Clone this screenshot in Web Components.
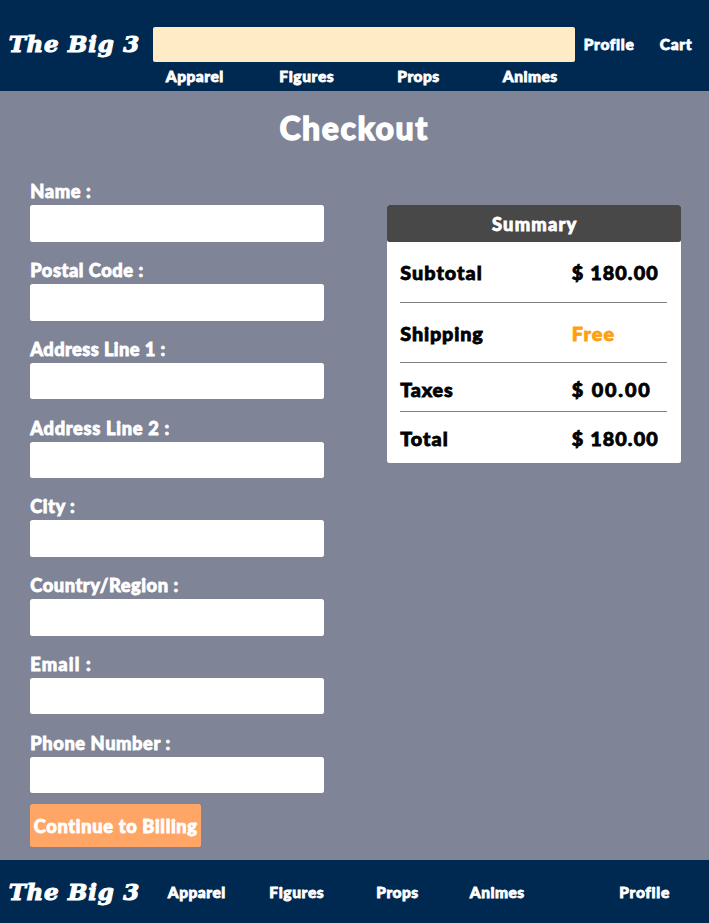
<!DOCTYPE html>
<html lang="en">
<head>
<meta charset="utf-8">
<title>The Big 3 - Checkout</title>
<style>
html, body { margin: 0; height: 923px; overflow: hidden; }
body { background: #7f8497; color: #fff; font-family: Lato, "Noto Sans", sans-serif; font-weight: 900; }
</style>
</head>
<body>
<checkout-page></checkout-page>
<script>
/* Single line of text, tracked so that it spans the width given in "fit". */
class FitText extends HTMLElement {
  connectedCallback() {
    const root = this.attachShadow({ mode: 'open' });
    root.innerHTML = '<style>:host{display:block;white-space:nowrap;line-height:28px;-webkit-text-stroke:var(--stroke,.8px)}span{display:inline-block;padding-left:.8px;font-variant-ligatures:none}</style><span></span>';
    const span = root.querySelector('span');
    span.textContent = this.getAttribute('text');
    const goal = parseFloat(this.getAttribute('fit')) - 0.8;
    const n = span.textContent.length;
    const gap = (goal - span.getBoundingClientRect().width) / (n - 1);
    span.style.letterSpacing = gap.toFixed(3) + 'px';
    span.style.marginRight = (-gap).toFixed(3) + 'px';
  }
}
customElements.define('fit-text', FitText);

class BrandLogo extends HTMLElement {
  connectedCallback() {
    this.attachShadow({ mode: 'open' }).innerHTML = `
      <style>
        :host { display: block; font: italic bold 23px/28px "DejaVu Serif", serif; --stroke: 1.1px; }
      </style>
      <fit-text text="The Big 3" fit="132"></fit-text>`;
  }
}
customElements.define('brand-logo', BrandLogo);

class SiteHeader extends HTMLElement {
  connectedCallback() {
    this.attachShadow({ mode: 'open' }).innerHTML = `
      <style>
        :host { display: block; box-sizing: border-box; height: 90.5px; padding-top: 26.5px; background: #002952; font-size: 15.5px; }
        .top { display: grid; grid-template-columns: 144.5px 422px 8.5px 76px auto; align-items: center; height: 35px; padding-left: 8px; }
        .search { height: 35px; border-radius: 2px; background: #ffecc7; }
        .search { grid-column: 2; }
        .profile { grid-column: 4; }
        nav { display: grid; grid-template-columns: 113.5px 118px 105.5px auto; align-items: center; height: 29px; padding-left: 165px; }
      </style>
      <div class="top">
        <brand-logo></brand-logo><div class="search"></div>
        <fit-text class="profile" text="Profile" fit="51.5"></fit-text>
        <fit-text text="Cart" fit="33.5"></fit-text>
      </div>
      <nav>
        <fit-text text="Apparel" fit="59"></fit-text>
        <fit-text text="Figures" fit="56"></fit-text>
        <fit-text text="Props" fit="43.5"></fit-text>
        <fit-text text="Animes" fit="56"></fit-text>
      </nav>`;
  }
}
customElements.define('site-header', SiteHeader);

class SiteFooter extends HTMLElement {
  connectedCallback() {
    this.attachShadow({ mode: 'open' }).innerHTML = `
      <style>
        :host { display: grid; box-sizing: border-box; height: 63.5px; padding: 1px 0 0 8px; align-items: center;
          grid-template-columns: 159px 101.5px 107px 93.5px 149.5px auto; background: #002952; font-size: 15.5px; }
        .profile { padding-top: 1px; }
      </style>
      <brand-logo></brand-logo>
      <fit-text text="Apparel" fit="59"></fit-text>
      <fit-text text="Figures" fit="56"></fit-text>
      <fit-text text="Props" fit="43.5"></fit-text>
      <fit-text text="Animes" fit="56"></fit-text>
      <fit-text class="profile" text="Profile" fit="51.5"></fit-text>`;
  }
}
customElements.define('site-footer', SiteFooter);

class FormField extends HTMLElement {
  connectedCallback() {
    this.attachShadow({ mode: 'open' }).innerHTML = `
      <style>
        :host { display: block; width: 294px; height: 78.75px; font-size: 18.3px; }
        .box { height: 36.5px; border-radius: 2.5px; background: #fff; }
      </style>
      <fit-text text="${this.getAttribute('label')}" fit="${this.getAttribute('fit')}"></fit-text>
      <div class="box"></div>`;
  }
}
customElements.define('form-field', FormField);

class SummaryRow extends HTMLElement {
  connectedCallback() {
    const a = n => this.getAttribute(n);
    this.attachShadow({ mode: 'open' }).innerHTML = `
      <style>
        :host { display: grid; box-sizing: border-box; grid-template-columns: 171.5px auto; align-items: center;
          margin: 0 14px 0 13px; color: #000; font-size: 19.8px; border-bottom: 1px solid #808080; }
        :host(:last-of-type) { border-bottom: 0; }
        .value { color: var(--value-color, #000); }
      </style>
      <fit-text text="${a('label')}" fit="${a('label-fit')}"></fit-text>
      <fit-text class="value" text="${a('value')}" fit="${a('value-fit')}"></fit-text>`;
  }
}
customElements.define('summary-row', SummaryRow);

class OrderSummary extends HTMLElement {
  connectedCallback() {
    this.attachShadow({ mode: 'open' }).innerHTML = `
      <style>
        :host { display: block; width: 294.5px; height: 257.5px; border-radius: 2.5px; background: #fff; }
        header { display: grid; place-items: center; height: 36.5px; border-radius: 2.5px; background: #484848; font-size: 18.3px; }
        .a { height: 61px; padding-top: 1px; }
        .b { height: 60px; padding-top: 1px; --value-color: #ff9f10; }
        .c { height: 49px; padding-top: 4px; }
        .d { height: 51px; padding-top: 1px; }
      </style>
      <header><fit-text text="Summary" fit="86"></fit-text></header>
      <summary-row class="a" label="Subtotal" label-fit="83" value="$ 180.00" value-fit="87.5"></summary-row>
      <summary-row class="b" label="Shipping" label-fit="84" value="Free" value-fit="44"></summary-row>
      <summary-row class="c" label="Taxes" label-fit="54" value="$ 00.00" value-fit="79.5"></summary-row>
      <summary-row class="d" label="Total" label-fit="49" value="$ 180.00" value-fit="87.5"></summary-row>`;
  }
}
customElements.define('order-summary', OrderSummary);

class BillingButton extends HTMLElement {
  connectedCallback() {
    this.attachShadow({ mode: 'open' }).innerHTML = `
      <style>
        :host { display: block; }
        button { display: grid; place-items: center; width: 171px; height: 43px; padding: 0; border: 0;
          border-radius: 2.5px; background: #ffa566; color: #fff; font: inherit; font-size: 18.3px; }
      </style>
      <button><fit-text text="Continue to Billing" fit="165"></fit-text></button>`;
  }
}
customElements.define('billing-button', BillingButton);

class CheckoutPage extends HTMLElement {
  connectedCallback() {
    this.attachShadow({ mode: 'open' }).innerHTML = `
      <style>
        :host { display: block; width: 709px; height: 923px; }
        main { box-sizing: border-box; height: 769px; padding-top: 23.2px; }
        h1 { display: grid; justify-content: center; margin: 0; height: 63.6px; font: inherit; font-size: 32px; padding-right: 3px; --stroke: 1.3px; }
        .columns { display: grid; grid-template-columns: 357px auto; padding-left: 29.5px; }
        billing-button { margin-top: -3.2px; }
        order-summary { margin-top: 28.2px; }
      </style>
      <site-header></site-header>
      <main>
        <h1><fit-text text="Checkout" fit="149.5"></fit-text></h1>
        <div class="columns">
          <div class="form">
            <form-field label="Name :" fit="62"></form-field>
            <form-field label="Postal Code :" fit="114.5"></form-field>
            <form-field label="Address Line 1 :" fit="136.5"></form-field>
            <form-field label="Address Line 2 :" fit="140.5"></form-field>
            <form-field label="City :" fit="46"></form-field>
            <form-field label="Country/Region :" fit="149.5"></form-field>
            <form-field label="Email :" fit="62"></form-field>
            <form-field label="Phone Number :" fit="141.5"></form-field>
            <billing-button></billing-button>
          </div>
          <order-summary></order-summary>
        </div>
      </main>
      <site-footer></site-footer>`;
  }
}
customElements.define('checkout-page', CheckoutPage);
</script>
</body>
</html>
